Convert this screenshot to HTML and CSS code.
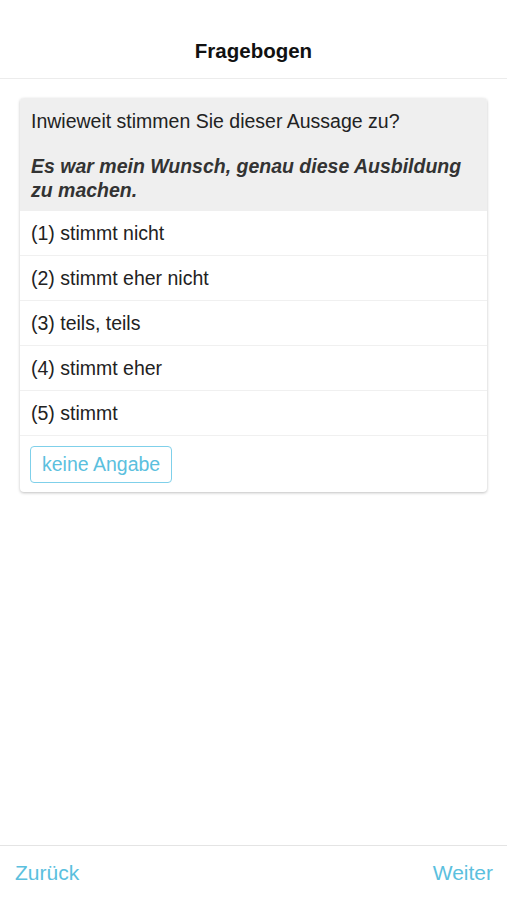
FILE: index.html
```html
<!doctype html>
<html>
  <head>
    <meta charset="utf-8">
    <meta name=viewport content="width=device-width, initial-scale=1"/>
    <title>Fragebogen</title>
    <link rel="stylesheet" href="styles.css">
  </head>
  <body>
    <div class="screen">
      <header class="topbar"><h1>Fragebogen</h1></header>
      <main class="content">
        <div class="card">
          <div class="card-head">
            <p class="question">Inwieweit stimmen Sie dieser Aussage zu?</p>
            <p class="statement">Es war mein Wunsch, genau diese Ausbildung zu machen.</p>
          </div>
          <ul class="answers">
            <li>(1) stimmt nicht</li>
            <li>(2) stimmt eher nicht</li>
            <li>(3) teils, teils</li>
            <li>(4) stimmt eher</li>
            <li>(5) stimmt</li>
          </ul>
          <div class="card-foot">
            <button class="btn-none">keine Angabe</button>
          </div>
        </div>
      </main>
      <footer class="bottombar">
        <a href="#">Zurück</a>
        <a href="#">Weiter</a>
      </footer>
    </div>
  </body>
</html>
```

FILE: styles.css
```css
body { margin: 0; font-family: "Liberation Sans", Arial, sans-serif; color: #222; background: #fff; }
.screen { display: flex; flex-direction: column; height: 900px; }
.topbar { height: 79px; border-bottom: 1px solid #ececec; display: flex; align-items: flex-end; justify-content: center; box-sizing: border-box; }
.topbar h1 { margin: 0 0 15px 0; font-size: 20.5px; font-weight: bold; color: #111; }
.content { flex: 1; padding: 19px 20px 0 20px; }
.card { border-radius: 4px; box-shadow: 0 1px 3px rgba(0,0,0,0.25); overflow: hidden; background: #fff; }
.card-head { background: #efefef; padding: 11px 11px 9px 11px; }
.card-head p { margin: 0; font-size: 19.5px; line-height: 24px; }
.card-head .statement { margin-top: 21px; font-weight: bold; font-style: italic; color: #333; }
.answers { list-style: none; margin: 0; padding: 0; }
.answers li { height: 45px; line-height: 45px; padding: 0 11px; font-size: 19.5px; border-bottom: 1px solid #f0f0f0; box-sizing: border-box; }
.card-foot { padding: 10px 10px 9px 10px; }
.btn-none { font-family: inherit; font-size: 19.5px; color: #5bc0de; background: #fff; border: 1px solid #7fd0ea; border-radius: 4px; padding: 0 11px; height: 37px; }
.bottombar { height: 54px; border-top: 1px solid #e4e4e4; display: flex; justify-content: space-between; align-items: center; padding: 0 14px 0 15px; }
.bottombar a { color: #5bc0de; text-decoration: none; font-size: 21px; }
```
